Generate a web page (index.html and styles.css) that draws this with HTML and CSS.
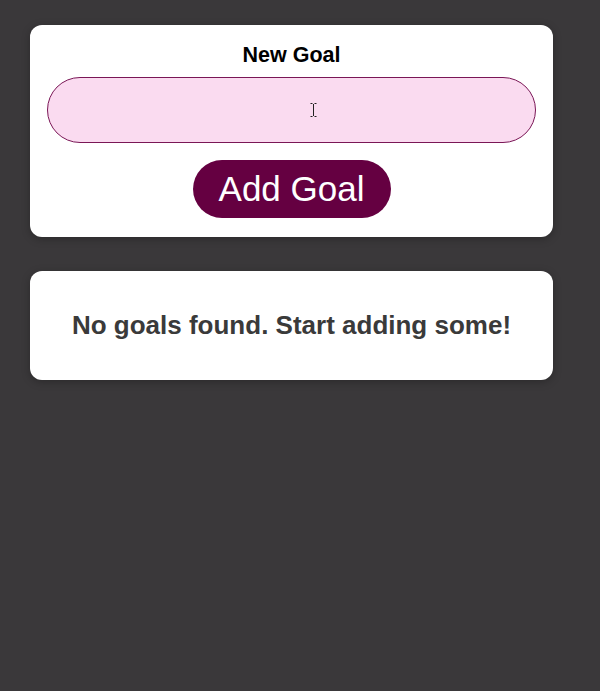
FILE: index.html
```html
<!DOCTYPE html>
<html lang="en">
<head>
<meta charset="utf-8">
<title>Course Goals</title>
<link rel="stylesheet" href="styles.css">
</head>
<body>
<main class="page">
  <section class="card goal-form">
    <form class="form">
      <label class="label" for="goal">New Goal</label>
      <div class="input-wrap">
        <input class="input" id="goal" type="text">
        <svg class="cursor" width="7" height="14" viewBox="0 0 7 14"><path d="M0.5 0.5h2v0M4.5 0.5h2M3.5 1v12M0.5 13.5h2M4.5 13.5h2" stroke="#222" stroke-width="1" fill="none"/></svg>
      </div>
      <button class="btn" type="button">Add Goal</button>
    </form>
  </section>
  <section class="card goals">
    <p class="empty">No goals found. Start adding some!</p>
  </section>
</main>
</body>
</html>
```
FILE: styles.css
```css
* { box-sizing: border-box; }
html, body { margin: 0; padding: 0; }
body {
  background: #3a383a;
  font-family: "Liberation Sans", Arial, sans-serif;
  height: 691px;
}
.page {
  width: 523px;
  margin-left: 30px;
  padding-top: 25px;
  display: flex;
  flex-direction: column;
  gap: 34px;
}
.card {
  background: #fff;
  border-radius: 12px;
  box-shadow: 0 2px 8px rgba(0,0,0,0.26);
}
.goal-form { padding: 18px 17px 19px; }
.form { display: flex; flex-direction: column; align-items: center; }
.label {
  font-weight: bold;
  font-size: 21.5px;
  line-height: 24px;
  color: #000;
  margin-bottom: 10px;
}
.input-wrap { position: relative; width: 100%; }
.input {
  display: block;
  width: 100%;
  height: 66px;
  border: 1px solid #7a1656;
  border-radius: 33px;
  background: #fadbf0;
  font: inherit;
  font-size: 20px;
  padding: 0 20px;
  outline: none;
}
.cursor { position: absolute; left: 263px; top: 26px; }
.btn {
  margin-top: 17px;
  width: 198px;
  height: 58px;
  border: none;
  border-radius: 29px;
  background: #650041;
  color: #fff;
  font-family: "Liberation Sans", Arial, sans-serif;
  font-size: 35px;
  padding: 0;
  cursor: pointer;
}
.goals {
  height: 109px;
  display: flex;
  align-items: center;
  justify-content: center;
}
.empty {
  margin: 0;
  font-weight: bold;
  font-size: 26px;
  color: #3a3a3a;
}
```
